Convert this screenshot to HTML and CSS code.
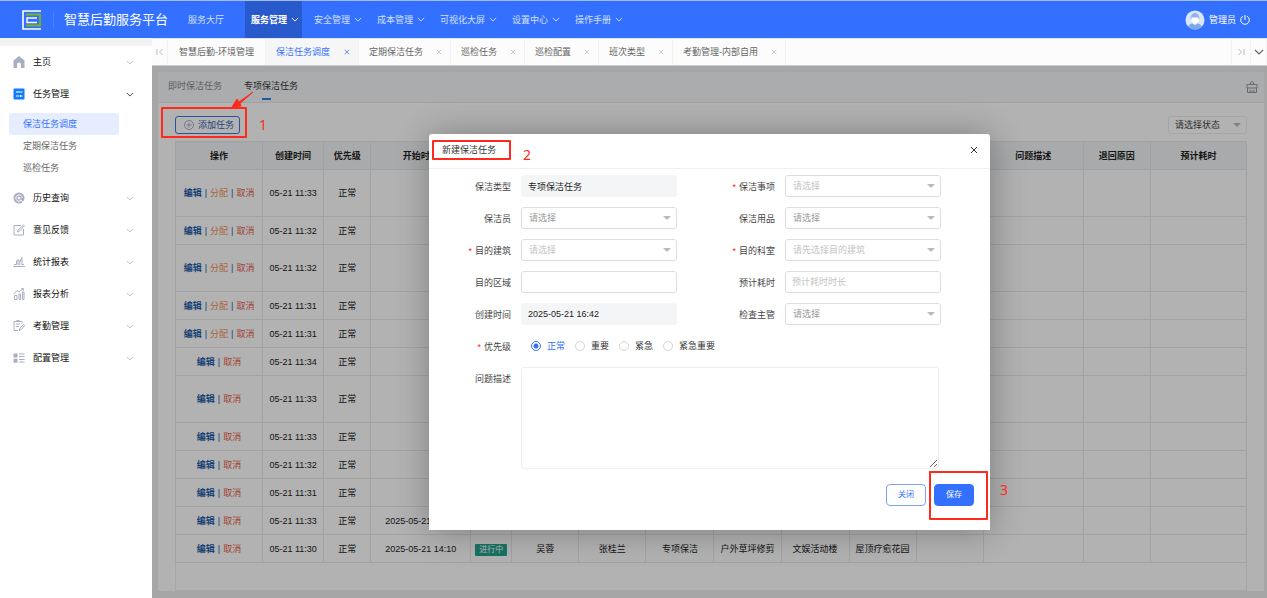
FILE: index.html
```html
<!DOCTYPE html>
<html lang="zh-CN">
<head>
    <meta charset="UTF-8">
    <meta name="viewport" content="width=device-width, initial-scale=1.0">
    <title>智慧后勤服务平台</title>
    <link rel="stylesheet" href="styles.css">
</head>
<body>
    <svg class="sprite" aria-hidden="true">
        <symbol id="down" viewBox="0 0 10 6"><path d="M1 1l4 4 4-4" fill="none" stroke="currentColor" stroke-width="1.2"/></symbol>
        <symbol id="cross" viewBox="0 0 8 8"><path d="M1 1l6 6M7 1L1 7" fill="none" stroke="currentColor"/></symbol>
    </svg>

    <header class="topbar">
        <svg class="logo" viewBox="0 0 20 20" fill="none">
            <path d="M19 1H1v18h18" stroke="#fff" stroke-width="1.6"/>
            <path d="M4 4.5h14v11H4" stroke="#7cb518" stroke-width="1.8"/>
            <path d="M15 8H5v4.500h10" stroke="#fff" stroke-width="1.4"/>
        </svg>
        <h1 class="brand">智慧后勤服务平台</h1>
        <nav class="topnav">
            <a href="#">服务大厅</a>
            <a href="#" class="active">服务管理<svg><use href="#down"/></svg></a>
            <a href="#">安全管理<svg><use href="#down"/></svg></a>
            <a href="#">成本管理<svg><use href="#down"/></svg></a>
            <a href="#">可视化大屏<svg><use href="#down"/></svg></a>
            <a href="#">设置中心<svg><use href="#down"/></svg></a>
            <a href="#">操作手册<svg><use href="#down"/></svg></a>
        </nav>
        <div class="user">
            <svg class="avatar" viewBox="0 0 20 20">
                <circle cx="10" cy="10" r="9.500" fill="#d9e6fb"/>
                <path d="M3 16.500c2-3 4-3.500 7-3.500s5 .5 7 3.500a9.500 9.500 0 0 1-14 0z" fill="#7fa8ea"/>
                <path d="M5.500 9c0-8 9-8 9 0z" fill="#8fb3ee"/>
                <path d="M6.500 7.500h7v3c0 2-2 4-3.500 4.500-1.500-.5-3.500-2.500-3.500-4.500z" fill="#fff"/>
            </svg>
            <span>管理员</span>
            <button class="icon-btn" aria-label="退出">
                <svg class="power" viewBox="0 0 10 10" fill="none" stroke="currentColor"><path d="M3 1.200a4.300 4.300 0 1 0 4 0M5 0v5"/></svg>
            </button>
        </div>
    </header>

    <div class="layout">
        <aside class="sidebar">
            <a href="#" class="menu">
                <svg viewBox="0 0 12 12"><path d="M6 0L.5 4.500V12H4V8.500a2 2 0 0 1 4 0V12h3.500V4.500z" fill="#a9aec2"/></svg>
                <span>主页</span><svg class="arrow"><use href="#down"/></svg>
            </a>
            <a href="#" class="menu open">
                <svg viewBox="0 0 12 12"><rect x=".5" y=".5" width="11" height="11" rx="1" fill="#0f7bff"/><path d="M3 4h1.500M6 4h3.500M3 8h3.500M8 8h1.500M5 3v2M7.500 7v2" stroke="#fff" fill="none"/></svg>
                <span>任务管理</span><svg class="arrow"><use href="#down"/></svg>
            </a>
            <div class="submenu">
                <a href="#" class="active">保洁任务调度</a>
                <a href="#">定期保洁任务</a>
                <a href="#">巡检任务</a>
            </div>
            <a href="#" class="menu">
                <svg viewBox="0 0 12 12"><circle cx="6" cy="6" r="5.500" fill="#a9aec2"/><path d="M8.300 8.300A3.200 3.200 0 1 1 9.200 6M7.500 7.500l3.500 3.500" fill="none" stroke="#fff"/><circle cx="6" cy="6" r="1.300" fill="#fff"/></svg>
                <span>历史查询</span><svg class="arrow"><use href="#down"/></svg>
            </a>
            <a href="#" class="menu">
                <svg viewBox="0 0 12 12" fill="none" stroke="#a9aec2"><path d="M8 1.500H1v9.500h9.500V5M4.500 8l.4-1.800L10.500.8l.9.9L6.200 7.500z"/></svg>
                <span>意见反馈</span><svg class="arrow"><use href="#down"/></svg>
            </a>
            <a href="#" class="menu">
                <svg viewBox="0 0 12 12" fill="none" stroke="#a9aec2"><path d="M0 10.500h12M1 8.500h2.500V5M5 9V3.500M6.800 9V5M9 9V1.500M9 8.500h2M3.500 5L5 3.500l2 2L9 1.500"/></svg>
                <span>统计报表</span><svg class="arrow"><use href="#down"/></svg>
            </a>
            <a href="#" class="menu">
                <svg viewBox="0 0 12 12" fill="none" stroke="#a9aec2"><path d="M.5 6L4 2.500l2 1.500L10 .8M8 .7h2.500v2M1.500 11.500v-4H4v4zM6 11.500V6h1.500v5.500zM9.500 11.500V4H11v7.500z"/></svg>
                <span>报表分析</span><svg class="arrow"><use href="#down"/></svg>
            </a>
            <a href="#" class="menu">
                <svg viewBox="0 0 12 12" fill="none" stroke="#a9aec2"><path d="M9 3.500v-2H1v9h4M3 4h4M3 6.500h3M3.500.5h3M6 10.500l1-2.500 3.500-3.500 1.200 1L8.500 9.500z"/></svg>
                <span>考勤管理</span><svg class="arrow"><use href="#down"/></svg>
            </a>
            <a href="#" class="menu">
                <svg viewBox="0 0 12 12"><path d="M.5 1.500h4v4h-4zM.5 6.800h4v4h-4zM6 1.500h5.500v1H6zM6 4h5.500v1H6zM6 7h5.500v1H6zM6 9.500h5.500v1H6z" fill="#a9aec2"/></svg>
                <span>配置管理</span><svg class="arrow"><use href="#down"/></svg>
            </a>
        </aside>

        <main class="main">
            <div class="page-tabs">
                <button class="edge" aria-label="第一个"><svg viewBox="0 0 8 8" fill="none" stroke="#bbb"><path d="M1 1v6M6.500 1l-3 3 3 3"/></svg></button>
                <a href="#" class="home">智慧后勤-环境管理</a>
                <a href="#" class="active">保洁任务调度<svg><use href="#cross"/></svg></a>
                <a href="#">定期保洁任务<svg><use href="#cross"/></svg></a>
                <a href="#">巡检任务<svg><use href="#cross"/></svg></a>
                <a href="#">巡检配置<svg><use href="#cross"/></svg></a>
                <a href="#">班次类型<svg><use href="#cross"/></svg></a>
                <a href="#">考勤管理-内部自用<svg><use href="#cross"/></svg></a>
                <button class="edge last" aria-label="最后一个"><svg viewBox="0 0 8 8" fill="none" stroke="#bbb"><path d="M7 1v6M1.500 1l3 3-3 3"/></svg></button>
                <button class="edge more" aria-label="更多"><svg><use href="#down"/></svg></button>
            </div>

            <div class="content">
                <section class="panel">
                    <div class="panel-tabs">
                        <a href="#">即时保洁任务</a>
                        <a href="#" class="active">专项保洁任务</a>
                        <button class="icon-btn clean" aria-label="清空">
                            <svg viewBox="0 0 12 12" fill="none" stroke="#999"><path d="M4.500 3.500V1.500q1.500-2 3 0v2M1 3.500h10V7H1zM1.500 7v4.500h9V7M4 11V9M6 11V9M8 11V9"/></svg>
                        </button>
                    </div>
                    <div class="toolbar">
                        <button class="btn-add"><svg viewBox="0 0 10 10" fill="none" stroke="#8f9cb8" stroke-width=".8"><circle cx="5" cy="5" r="4.500"/><path d="M5 2.500v5M2.500 5h5"/></svg>添加任务</button>
                        <div class="select status">
                            <select aria-label="状态"><option>请选择状态</option></select>
                        </div>
                    </div>
                    <div class="table-box">
                        <table>
                            <colgroup>
                                <col class="c87"><col class="c61"><col class="c47"><col class="c100"><col class="c41">
                                <col class="c67"><col class="c67"><col class="c68"><col class="c67"><col class="c68">
                                <col class="c67"><col class="c67"><col class="c100"><col class="c67"><col class="c96">
                            </colgroup>
                            <thead>
                                <tr>
                                    <th>操作</th><th>创建时间</th><th>优先级</th><th>开始时间</th><th></th><th></th><th></th><th></th><th></th><th></th><th></th><th></th><th>问题描述</th><th>退回原因</th><th>预计耗时</th>
                                </tr>
                            </thead>
                            <tbody id="tareas"></tbody>
                        </table>
                    </div>
                </section>

                <div class="note note-add">
                    <svg class="note-arrow" viewBox="0 0 24 18"><path d="M22 1L8 11l-2-3L1 16l9-1-1-2.500z" fill="#ff2a1c" stroke="#ff2a1c" stroke-linejoin="round"/></svg>
                    <span>1</span>
                </div>

                <div class="shade">
                    <div class="modal" role="dialog" aria-labelledby="modal-title">
                        <div class="modal-head">
                            <h2 id="modal-title">新建保洁任务</h2>
                            <button class="icon-btn" aria-label="关闭窗口"><svg><use href="#cross"/></svg></button>
                        </div>
                        <form id="formulario">
                            <label for="tipo">保洁类型</label>
                            <input type="text" id="tipo" value="专项保洁任务" readonly>
                            <label for="item" class="required">保洁事项</label>
                            <div class="select light"><select id="item"><option>请选择</option></select></div>

                            <label for="cleaner">保洁员</label>
                            <div class="select"><select id="cleaner"><option>请选择</option></select></div>
                            <label for="supplies">保洁用品</label>
                            <div class="select"><select id="supplies"><option>请选择</option></select></div>

                            <label for="building" class="required">目的建筑</label>
                            <div class="select light"><select id="building"><option>请选择</option></select></div>
                            <label for="room" class="required">目的科室</label>
                            <div class="select light"><select id="room"><option>请先选择目的建筑</option></select></div>

                            <label for="area">目的区域</label>
                            <input type="text" id="area">
                            <label for="cost">预计耗时</label>
                            <input type="text" id="cost" placeholder="预计耗时时长">

                            <label for="created">创建时间</label>
                            <input type="text" id="created" value="2025-05-21 16:42" readonly>
                            <label for="boss">检查主管</label>
                            <div class="select"><select id="boss"><option>请选择</option></select></div>

                            <span class="label required" id="level">优先级</span>
                            <div class="radios" role="radiogroup" aria-labelledby="level">
                                <label><input type="radio" name="level" checked><span>正常</span></label>
                                <label><input type="radio" name="level"><span>重要</span></label>
                                <label><input type="radio" name="level"><span>紧急</span></label>
                                <label><input type="radio" name="level"><span>紧急重要</span></label>
                            </div>

                            <label for="desc">问题描述</label>
                            <textarea id="desc"></textarea>

                            <div class="actions">
                                <button type="button" class="btn">关闭</button>
                                <button type="submit" class="btn primary">保存</button>
                            </div>
                        </form>
                        <div class="note note-title"><span>2</span></div>
                        <div class="note note-save"><span>3</span></div>
                    </div>
                </div>
            </div>
        </main>
    </div>

    <script>
        const tareas = [
            { hora: '11:33', asignar: true, alta: true },
            { hora: '11:32', asignar: true },
            { hora: '11:32', asignar: true, alta: true },
            { hora: '11:31', asignar: true },
            { hora: '11:31', asignar: true },
            { hora: '11:34' },
            { hora: '11:33', alta: true },
            { hora: '11:33' },
            { hora: '11:32' },
            { hora: '11:31' },
            { hora: '11:33', resto: ['2025-05-21 14:10'] },
            { hora: '11:30', resto: ['2025-05-21 14:10', '<span class="badge">进行中</span>', '吴蓉', '张桂兰', '专项保洁', '户外草坪修剪', '文娱活动楼', '屋顶疗愈花园'] }
        ];

        const cuerpo = document.getElementById('tareas');

        tareas.forEach(tarea => {
            const fila = document.createElement('tr');
            if (tarea.alta) {
                fila.className = 'tall';
            }

            let acciones = '<a href="#" class="edit">编辑</a><i>|</i>';
            if (tarea.asignar) {
                acciones += '<a href="#" class="assign">分配</a><i>|</i>';
            }
            acciones += '<a href="#" class="cancel">取消</a>';

            const celdas = [acciones, '05-21 ' + tarea.hora, '正常'].concat(tarea.resto || []);
            for (let i = 0; i < 15; i++) {
                const celda = document.createElement('td');
                celda.innerHTML = celdas[i] || '';
                fila.appendChild(celda);
            }
            cuerpo.appendChild(fila);
        });
    </script>
</body>
</html>
```
FILE: styles.css
```css
* {
    box-sizing: border-box;
}
body {
    margin: 0;
    height: 100vh;
    display: flex;
    flex-direction: column;
    overflow: hidden;
    font-family: "Liberation Sans", "Noto Sans CJK SC", sans-serif;
    font-size: 9px;
    line-height: 14px;
    color: #333;
    background-color: #fff;
}
button, input, select, textarea {
    font: inherit;
    color: inherit;
    margin: 0;
}
button {
    cursor: pointer;
}
a {
    color: inherit;
    text-decoration: none;
}
svg {
    display: block;
    flex: none;
}
.sprite {
    display: none;
}
.icon-btn {
    border: 0;
    padding: 0;
    background: none;
}

/* top bar */
.topbar {
    display: flex;
    align-items: center;
    height: 38px;
    flex: none;
    padding: 0 17px 0 22px;
    border-top: 1px solid #a3bcf5;
    background-color: #3370ff;
    color: #fff;
}
.logo {
    width: 20px;
    height: 20px;
}
.brand {
    margin: 0 14px 0 11px;
    padding-left: 10px;
    border-left: 1px solid #4a80ff;
    font-size: 13px;
    line-height: 18px;
    font-weight: normal;
    white-space: nowrap;
}
.topnav {
    display: flex;
    align-self: stretch;
    gap: 6px;
    color: #d3e0ff;
}
.topnav a {
    display: flex;
    align-items: center;
    gap: 4px;
    min-width: 57px;
    padding: 0 3px 0 6px;
    white-space: nowrap;
}
.topnav .active {
    background-color: #295acc;
    color: #fff;
    font-weight: bold;
}
.topnav svg {
    width: 8px;
    height: 5px;
}
.user {
    display: flex;
    align-items: center;
    gap: 4px;
    margin-left: auto;
}
.avatar {
    width: 20px;
    height: 20px;
}
.user .icon-btn {
    color: #fff;
}
.power {
    width: 10px;
    height: 10px;
}

.layout {
    display: flex;
    flex: 1;
    min-height: 0;
}

/* sidebar */
.sidebar {
    width: 152px;
    flex: none;
    border-top: 8px solid #f2f2f2;
}
.menu {
    display: flex;
    align-items: center;
    gap: 8px;
    height: 32px;
    padding: 0 18px 0 13px;
    color: #111;
}
.menu svg {
    width: 12px;
    height: 12px;
}
.menu .arrow {
    width: 8px;
    height: 5px;
    margin-left: auto;
    color: #c4c4c4;
}
.menu.open .arrow {
    color: #444;
}
.submenu {
    padding: 3px 33px 3px 9px;
}
.submenu a {
    display: block;
    padding: 4px 14px;
    border-radius: 2px;
    color: #666;
}
.submenu .active {
    background-color: #e6edff;
    color: #3370ff;
}

/* page tabs */
.main {
    display: flex;
    flex-direction: column;
    flex: 1;
    min-width: 0;
}
.page-tabs {
    display: flex;
    height: 28px;
    flex: none;
    border-top: 1px solid #dfe6f7;
    border-bottom: 1px solid #ccc;
    background-color: #fcfcfc;
    color: #666;
}
.page-tabs a {
    display: flex;
    align-items: center;
    gap: 13px;
    padding: 0 8px 0 10px;
    border-right: 1px solid #f2f2f2;
    white-space: nowrap;
}
.page-tabs .home {
    padding-left: 11px;
    padding-right: 11px;
}
.page-tabs a svg {
    width: 6px;
    height: 6px;
    color: #bbb;
}
.page-tabs .active,
.page-tabs .active svg {
    color: #3370ff;
}
.page-tabs .active {
    gap: 14px;
    background-color: #f6f6f6;
}
.edge {
    display: flex;
    align-items: center;
    justify-content: center;
    width: 16px;
    padding: 0;
    border: 0;
    border-right: 1px solid #f2f2f2;
    background: none;
}
.edge svg {
    width: 8px;
    height: 8px;
}
.edge.last {
    width: 20px;
    margin-left: auto;
    border-left: 1px solid #f2f2f2;
}
.edge.more svg {
    width: 10px;
    height: 6px;
}

/* task panel */
.content {
    position: relative;
    flex: 1;
    min-height: 0;
    padding: 6px 3px 7px 6px;
    background-color: #eee;
}
.panel {
    display: flex;
    flex-direction: column;
    height: 100%;
    background-color: #fff;
}
.panel-tabs {
    display: flex;
    gap: 22px;
    height: 31px;
    flex: none;
    padding: 0 6px 0 10px;
    border-bottom: 1px solid #eaeaea;
    background-color: #f5f6f8;
    color: #888;
}
.panel-tabs a {
    display: flex;
    flex-direction: column;
    align-items: center;
    justify-content: space-between;
    padding-top: 7px;
}
.panel-tabs .active {
    color: #333;
}
.panel-tabs .active::after {
    content: "";
    width: 9px;
    height: 2px;
    margin: 0 9px 2px 0;
    background-color: #2b87e0;
}
.clean {
    margin-left: auto;
}
.clean svg {
    width: 12px;
    height: 12px;
}
.toolbar {
    display: flex;
    justify-content: space-between;
    padding: 13px 17px 7px;
}
.btn-add {
    display: flex;
    align-items: center;
    gap: 4px;
    height: 18px;
    padding: 0 5px 0 8px;
    border: 1px solid #4275d8;
    border-radius: 3px;
    background-color: #fff;
    color: #3563b5;
}
.btn-add svg {
    width: 10px;
    height: 10px;
}
.table-box {
    flex: 1;
    min-height: 0;
    margin: 0 17px;
    box-shadow: inset 0 0 0 1px #f0f0f0;
    overflow: hidden;
}
table {
    width: 100%;
    table-layout: fixed;
    border-collapse: collapse;
}
.c41 { width: 41px; }
.c47 { width: 47px; }
.c61 { width: 61px; }
.c67 { width: 67px; }
.c68 { width: 68px; }
.c87 { width: 87px; }
.c96 { width: 96px; }
.c100 { width: 100px; }
th, td {
    height: 28px;
    padding: 0;
    border: 1px solid #e9e9e9;
    text-align: center;
    white-space: nowrap;
    color: #222;
}
th {
    background-color: #f2f4f6;
}
.tall td {
    height: 47px;
}
td i {
    margin: 0 3px;
    font-style: normal;
    color: #2460a8;
}
.edit {
    color: #1d5ba6;
    font-weight: bold;
}
.assign {
    color: #f29058;
}
.cancel {
    color: #e8604c;
}
.badge {
    display: inline-block;
    padding: 0 4px;
    border-radius: 1px;
    font-size: 8px;
    line-height: 12px;
    background-color: #22a58f;
    color: #fff;
}

/* fields */
.select {
    position: relative;
}
.select::after {
    content: "";
    position: absolute;
    right: 6px;
    top: 50%;
    margin-top: -2px;
    border: 4px solid transparent;
    border-top-color: #bbb;
    border-bottom: 0;
    pointer-events: none;
}
input[type="text"], select {
    display: block;
    width: 100%;
    height: 22px;
    padding: 0 6px;
    border: 1px solid #ddd;
    border-radius: 3px;
    background-color: #fff;
    outline: none;
}
select {
    appearance: none;
    padding: 0 7px;
    color: #999;
}
.light select,
input::placeholder {
    color: #c4c4c4;
}
input[readonly] {
    border-color: #f4f5f7;
    background-color: #f4f5f7;
    color: #222;
}
.status {
    width: 79px;
}
.status select {
    height: 18px;
    padding: 0 6px;
    border-color: #eee;
    color: #444;
}

/* modal */
.shade {
    position: absolute;
    inset: 0;
    display: flex;
    align-items: center;
    justify-content: center;
    background-color: rgba(0, 0, 0, 0.3);
}
.modal {
    position: relative;
    width: 561px;
    max-width: 100%;
    border-radius: 3px 3px 0 0;
    background-color: #fff;
    box-shadow: 1px 1px 34px rgba(0, 0, 0, 0.3);
}
.modal-head {
    display: flex;
    align-items: center;
    justify-content: space-between;
    height: 35px;
    padding: 0 12px 2px 13px;
    border-bottom: 1px solid #f0f0f0;
}
.modal-head h2 {
    margin: 0;
    font-size: 9px;
    font-weight: normal;
}
.modal-head svg {
    width: 8px;
    height: 8px;
    color: #333;
}
form {
    display: grid;
    grid-template-columns: 92px 1fr 108px 1fr;
    row-gap: 10px;
    padding: 6px 49px 24px 0;
}
form > label,
.label {
    padding-right: 10px;
    line-height: 24px;
    height: 22px;
    text-align: right;
    color: #444;
}
.required::before {
    content: "*";
    margin-right: 3px;
    color: #ff2020;
}
.radios {
    grid-column: 2 / -1;
    display: flex;
    align-items: center;
    gap: 10px;
    padding-left: 10px;
}
.radios label {
    display: flex;
    align-items: center;
    gap: 6px;
}
.radios input {
    appearance: none;
    width: 10px;
    height: 10px;
    border: 1px solid #d5d5d5;
    border-radius: 50%;
}
.radios input:checked {
    border-color: #3370ff;
    background: radial-gradient(circle, #3370ff 2px, #fff 3px);
}
.radios input:checked + span {
    color: #3370ff;
}
textarea {
    grid-column: 2 / -1;
    height: 102px;
    margin-right: 2px;
    border: 1px solid #eee;
    border-radius: 3px;
    outline: none;
}
.actions {
    grid-column: 1 / -1;
    display: flex;
    justify-content: flex-end;
    gap: 8px;
    margin: 5px -33px 0 0;
}
.btn {
    width: 40px;
    height: 22px;
    padding: 0;
    border: 1px solid #7ca2ff;
    border-radius: 4px;
    background-color: #fff;
    color: #3370ff;
    font-size: 8px;
}
.btn.primary {
    border-color: #3370ff;
    background-color: #3370ff;
    color: #fff;
}

/* numbered steps drawn over the page */
.note {
    position: absolute;
    border: 2px solid #ff2a1c;
    border-radius: 1px;
    color: #ff2a1c;
    font-family: "Noto Sans", sans-serif;
    font-size: 14px;
    line-height: 16px;
    pointer-events: none;
}
.note span {
    position: absolute;
    left: 100%;
    margin-left: 14px;
}
.note-add {
    z-index: 2;
    left: 9px;
    top: 41px;
    width: 86px;
    height: 31px;
}
.note-add span {
    top: 8px;
}
.note-arrow {
    position: absolute;
    right: -10px;
    top: -18px;
    width: 24px;
    height: 18px;
}
.note-title {
    left: 3px;
    top: 6px;
    width: 79px;
    height: 20px;
}
.note-title span {
    top: 5px;
}
.note-save {
    right: 2px;
    bottom: 10px;
    width: 59px;
    height: 49px;
}
.note-save span {
    top: 9px;
}
```
